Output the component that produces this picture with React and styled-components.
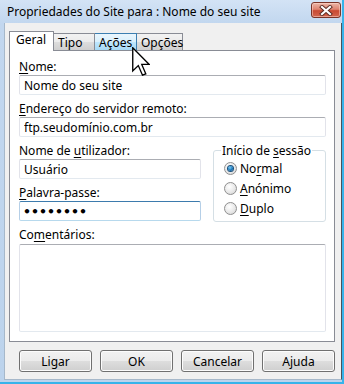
import React from "react";
import styled, { createGlobalStyle, css } from "styled-components";

const GlobalStyle = createGlobalStyle`
  html, body {
    margin: 0;
    padding: 0;
    background: #fff;
  }
  body {
    font-family: "Noto Sans", "Open Sans", sans-serif;
    font-size: 12px;
    color: #000;
  }
`;

const Window = styled.div`
  position: relative;
  width: 344px;
  height: 384px;
  box-sizing: border-box;
  display: flex;
  flex-direction: column;
  background: linear-gradient(#d3e3f5 0px, #c2d7ef 23px, #bcd3ec 100%);
  border-right: 2px solid #37b3ea;
  border-bottom: 2px solid #37b3ea;
  overflow: hidden;
`;

const TitleBar = styled.div`
  height: 23px;
  flex: none;
  display: flex;
  align-items: center;
  justify-content: space-between;
  padding: 0 1px 0 7px;
  font-size: 12px;
  line-height: 15px;
`;

const CloseButton = styled.div`
  width: 30px;
  height: 16px;
  box-sizing: border-box;
  margin-top: -3px;
  border: 1px solid #7a3428;
  border-radius: 3px;
  background: linear-gradient(#ebb6a8 0%, #de8370 45%, #c94a33 55%, #d2664e 100%);
  box-shadow: inset 0 0 0 1px rgba(255, 220, 210, 0.5);
  display: flex;
  align-items: center;
  justify-content: center;
`;

const Client = styled.div`
  flex: 1;
  margin: 0 0 2px 4px;
  padding: 8px 6px 7px 4px;
  background: #f0f0f0;
  border-left: 1px solid #a6b8ca;
  border-right: 1px solid #48525c;
  border-bottom: 1px solid #a6b8ca;
  display: flex;
  flex-direction: column;
`;

const TabStrip = styled.div`
  display: flex;
  align-items: flex-end;
  height: 19px;
  flex: none;
`;

const Tab = styled.div`
  box-sizing: border-box;
  width: ${(p) => p.w}px;
  height: 17px;
  padding: 1px 0 0 4px;
  line-height: 15px;
  white-space: nowrap;
  border: 1px solid #898c95;
  border-bottom: none;
  background: linear-gradient(#f2f2f2 0%, #ebebeb 50%, #dddddd 51%, #cfcfcf 100%);
  & + & {
    border-left: none;
  }
  ${(p) =>
    p.hot &&
    css`
      border: 1px solid #3c7fb1;
      border-bottom: none;
      background: linear-gradient(#eaf6fd 0%, #d9f0fc 50%, #bee6fd 51%, #a7d9f5 100%);
      & + & {
        border-left: 1px solid #3c7fb1;
      }
    `}
  ${(p) =>
    p.active &&
    css`
      position: relative;
      z-index: 1;
      height: 20px;
      margin-bottom: -1px;
      padding: 0 0 0 6px;
      background: #fff;
    `}
`;

const Panel = styled.div`
  flex: 1;
  background: #fff;
  border: 1px solid #898c95;
  padding: 8px 8px 9px 9px;
  display: flex;
  flex-direction: column;
`;

const Label = styled.div`
  line-height: 15px;
  margin-top: ${(p) => p.mt || 0}px;
  margin-bottom: ${(p) => (p.mb === undefined ? 1 : p.mb)}px;
  white-space: nowrap;
`;

const Key = styled.span`
  text-decoration: underline;
  text-underline-offset: 2px;
`;

const TextBox = styled.input`
  box-sizing: border-box;
  width: 100%;
  height: 20px;
  margin: 0;
  padding: 0 4px;
  font: inherit;
  font-size: 12px;
  color: #000;
  background: #fff;
  border: 1px solid;
  border-color: #abadb3 #e2e3ea #e3e9ef #e2e3ea;
  border-radius: 2px;
  outline: none;
  ${(p) =>
    p.focused &&
    css`
      border-color: #3d7bad #b5cfe7 #b7d9ed #b5cfe7;
    `}
  ${(p) =>
    p.type === "password" &&
    css`
      padding-left: 3px;
      letter-spacing: 0;
      font-family: "DejaVu Sans", sans-serif;
      font-size: 12.5px;
      font-weight: bold;
    `}
`;

const Notes = styled.textarea`
  box-sizing: border-box;
  flex: 1;
  width: 100%;
  margin: 0;
  resize: none;
  font: inherit;
  background: #fff;
  border: 1px solid;
  border-color: #abadb3 #e2e3ea #e3e9ef #e2e3ea;
  border-radius: 2px;
  outline: none;
`;

const Split = styled.div`
  display: grid;
  grid-template-columns: 1fr 113px;
  column-gap: 12px;
  margin-top: 6px;
`;

const Column = styled.div`
  display: flex;
  flex-direction: column;
`;

const GroupBox = styled.fieldset`
  margin: 0 0 -1px 0;
  padding: 3px 6px 0 10px;
  border: 1px solid #d5dfe5;
  border-radius: 3px;
  display: flex;
  flex-direction: column;
  gap: 5px;
  min-width: 0;
`;

const Legend = styled.legend`
  padding: 0 1px;
  margin-left: -3px;
  line-height: 15px;
`;

const RadioRow = styled.label`
  display: flex;
  align-items: center;
  gap: 3px;
  height: 15px;
  line-height: 15px;
`;

const RadioDot = styled.span`
  box-sizing: border-box;
  width: 13px;
  height: 13px;
  border-radius: 50%;
  border: 1px solid #8f8f8f;
  background: radial-gradient(circle at 40% 35%, #ffffff 0%, #e8e8e8 55%, #cfcfcf 100%);
  display: flex;
  align-items: center;
  justify-content: center;
  flex: none;
  &::after {
    content: "";
    width: 5px;
    height: 5px;
    border-radius: 50%;
    background: ${(p) =>
      p.checked ? "radial-gradient(circle at 40% 35%, #7fd0f5 0%, #1d7bbf 50%, #0a4c86 100%)" : "transparent"};
    box-shadow: ${(p) => (p.checked ? "0 0 0 1px #19507c" : "none")};
  }
`;

const ButtonRow = styled.div`
  flex: none;
  display: flex;
  justify-content: flex-end;
  gap: 8px;
  margin-top: 8px;
`;

const Button = styled.div`
  box-sizing: border-box;
  width: 73px;
  height: 22px;
  border: 1px solid #707070;
  border-radius: 3px;
  background: linear-gradient(#f2f2f2 0%, #ebebeb 50%, #dddddd 51%, #cfcfcf 100%);
  box-shadow: inset 0 0 0 1px #fcfcfc;
  display: flex;
  align-items: center;
  justify-content: center;
  line-height: 15px;
`;

const Cursor = styled.svg`
  position: absolute;
  left: 132px;
  top: 47px;
  z-index: 5;
`;

const tabs = [
  { name: "Geral", w: 45, active: true },
  { name: "Tipo", w: 41 },
  { name: "Ações", w: 42, hot: true },
  { name: "Opções", w: 46 },
];

const logins = [
  { pre: "No", key: "r", post: "mal", checked: true },
  { pre: "", key: "A", post: "nónimo" },
  { pre: "", key: "D", post: "uplo" },
];

export default function App() {
  return (
    <>
      <GlobalStyle />
      <Window>
        <TitleBar>
          <span>Propriedades do Site para : Nome do seu site</span>
          <CloseButton>
            <svg width="14" height="11" viewBox="0 0 14 11">
              <path d="M3 2 L11 9 M11 2 L3 9" stroke="#5a2a22" strokeWidth="4" strokeLinecap="square" />
              <path d="M3 2 L11 9 M11 2 L3 9" stroke="#fff" strokeWidth="2.2" strokeLinecap="square" />
            </svg>
          </CloseButton>
        </TitleBar>
        <Client>
          <TabStrip>
            {tabs.map((t) => (
              <Tab key={t.name} w={t.w} active={t.active} hot={t.hot}>
                {t.name}
              </Tab>
            ))}
          </TabStrip>
          <Panel>
            <Label>
              <Key>N</Key>ome:
            </Label>
            <TextBox readOnly value="Nome do seu site" />
            <Label mt={6}>
              <Key>E</Key>ndereço do servidor remoto:
            </Label>
            <TextBox readOnly value="ftp.seudomínio.com.br" />
            <Split>
              <Column>
                <Label>
                  Nome de <Key>u</Key>tilizador:
                </Label>
                <TextBox readOnly value="Usuário" />
                <Label mt={6}>
                  <Key>P</Key>alavra-passe:
                </Label>
                <TextBox readOnly focused type="password" value="12345678" />
              </Column>
              <GroupBox>
                <Legend>
                  Início de <Key>s</Key>essão
                </Legend>
                {logins.map((r) => (
                  <RadioRow key={r.post}>
                    <RadioDot checked={r.checked} />
                    <span>
                      {r.pre}
                      <Key>{r.key}</Key>
                      {r.post}
                    </span>
                  </RadioRow>
                ))}
              </GroupBox>
            </Split>
            <Label mt={6} mb={2}>
              Co<Key>m</Key>entários:
            </Label>
            <Notes readOnly />
          </Panel>
          <ButtonRow>
            <Button>Ligar</Button>
            <Button>OK</Button>
            <Button>Cancelar</Button>
            <Button>Ajuda</Button>
          </ButtonRow>
        </Client>
        <Cursor width="18" height="30" viewBox="0 0 12 20">
          <path
            d="M0.5 0.5 L0.5 16 L4.2 12.4 L7 18.8 L9.2 17.9 L6.5 11.6 L11.5 11.6 Z"
            fill="#fff"
            stroke="#000"
            strokeWidth="0.9"
            strokeLinejoin="miter"
          />
        </Cursor>
      </Window>
    </>
  );
}
